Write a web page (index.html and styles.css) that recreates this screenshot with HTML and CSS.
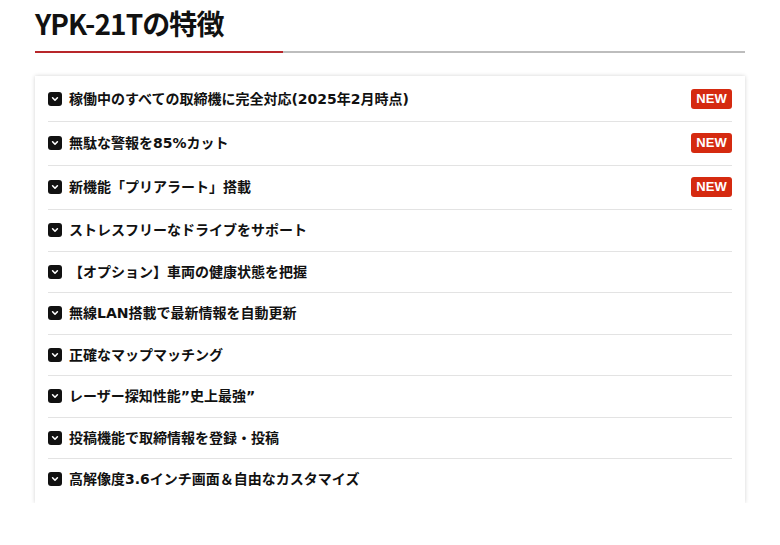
FILE: index.html
```html
<!DOCTYPE html>
<html lang="ja">
<head>
<meta charset="utf-8">
<link rel="stylesheet" href="styles.css">
</head>
<body>
<div class="wrap">
  <h2 class="title">YPK-21Tの特徴</h2>
  <ul class="card">
    <li class="row badge-row"><span class="ic"><svg width="14" height="14" viewBox="0 0 14 14"><rect width="14" height="14" rx="3" fill="#111"/><path d="M4.6 5.8 L7 8.2 L9.4 5.8" fill="none" stroke="#fff" stroke-width="1.6" stroke-linecap="round" stroke-linejoin="round"/></svg></span><span class="txt">稼働中のすべての取締機に完全対応(2025年2月時点)</span><span class="new">NEW</span></li>
    <li class="row badge-row"><span class="ic"><svg width="14" height="14" viewBox="0 0 14 14"><rect width="14" height="14" rx="3" fill="#111"/><path d="M4.6 5.8 L7 8.2 L9.4 5.8" fill="none" stroke="#fff" stroke-width="1.6" stroke-linecap="round" stroke-linejoin="round"/></svg></span><span class="txt">無駄な警報を85%カット</span><span class="new">NEW</span></li>
    <li class="row badge-row"><span class="ic"><svg width="14" height="14" viewBox="0 0 14 14"><rect width="14" height="14" rx="3" fill="#111"/><path d="M4.6 5.8 L7 8.2 L9.4 5.8" fill="none" stroke="#fff" stroke-width="1.6" stroke-linecap="round" stroke-linejoin="round"/></svg></span><span class="txt">新機能「プリアラート」搭載</span><span class="new">NEW</span></li>
    <li class="row"><span class="ic"><svg width="14" height="14" viewBox="0 0 14 14"><rect width="14" height="14" rx="3" fill="#111"/><path d="M4.6 5.8 L7 8.2 L9.4 5.8" fill="none" stroke="#fff" stroke-width="1.6" stroke-linecap="round" stroke-linejoin="round"/></svg></span><span class="txt">ストレスフリーなドライブをサポート</span></li>
    <li class="row"><span class="ic"><svg width="14" height="14" viewBox="0 0 14 14"><rect width="14" height="14" rx="3" fill="#111"/><path d="M4.6 5.8 L7 8.2 L9.4 5.8" fill="none" stroke="#fff" stroke-width="1.6" stroke-linecap="round" stroke-linejoin="round"/></svg></span><span class="txt">【オプション】車両の健康状態を把握</span></li>
    <li class="row"><span class="ic"><svg width="14" height="14" viewBox="0 0 14 14"><rect width="14" height="14" rx="3" fill="#111"/><path d="M4.6 5.8 L7 8.2 L9.4 5.8" fill="none" stroke="#fff" stroke-width="1.6" stroke-linecap="round" stroke-linejoin="round"/></svg></span><span class="txt">無線LAN搭載で最新情報を自動更新</span></li>
    <li class="row"><span class="ic"><svg width="14" height="14" viewBox="0 0 14 14"><rect width="14" height="14" rx="3" fill="#111"/><path d="M4.6 5.8 L7 8.2 L9.4 5.8" fill="none" stroke="#fff" stroke-width="1.6" stroke-linecap="round" stroke-linejoin="round"/></svg></span><span class="txt">正確なマップマッチング</span></li>
    <li class="row"><span class="ic"><svg width="14" height="14" viewBox="0 0 14 14"><rect width="14" height="14" rx="3" fill="#111"/><path d="M4.6 5.8 L7 8.2 L9.4 5.8" fill="none" stroke="#fff" stroke-width="1.6" stroke-linecap="round" stroke-linejoin="round"/></svg></span><span class="txt">レーザー探知性能”史上最強”</span></li>
    <li class="row"><span class="ic"><svg width="14" height="14" viewBox="0 0 14 14"><rect width="14" height="14" rx="3" fill="#111"/><path d="M4.6 5.8 L7 8.2 L9.4 5.8" fill="none" stroke="#fff" stroke-width="1.6" stroke-linecap="round" stroke-linejoin="round"/></svg></span><span class="txt">投稿機能で取締情報を登録・投稿</span></li>
    <li class="row"><span class="ic"><svg width="14" height="14" viewBox="0 0 14 14"><rect width="14" height="14" rx="3" fill="#111"/><path d="M4.6 5.8 L7 8.2 L9.4 5.8" fill="none" stroke="#fff" stroke-width="1.6" stroke-linecap="round" stroke-linejoin="round"/></svg></span><span class="txt">高解像度3.6インチ画面＆自由なカスタマイズ</span></li>
  </ul>
</div>
</body>
</html>
```
FILE: styles.css
```css
* { box-sizing: border-box; }
html, body { margin: 0; padding: 0; background: #fff; }
body {
  font-family: "Noto Sans CJK JP", "Noto Sans", sans-serif;
  color: #111;
}
.wrap {
  padding: 3px 35px 0 35px;
}
.title {
  position: relative;
  margin: 0;
  font-size: 28px;
  line-height: 40px;
  font-weight: 700;
  letter-spacing: -0.9px;
  padding-bottom: 8px;
  border-bottom: 2px solid #bdbdbd;
}
.title::after {
  content: "";
  position: absolute;
  left: 0;
  bottom: -2px;
  width: 248px;
  height: 2px;
  background: #b8262a;
}
.card {
  list-style: none;
  margin: 23px 0 0 0;
  padding: 2px 13px 3px;
  background: #fff;
  box-shadow: 0 0 4px rgba(0, 0, 0, 0.18);
}
.row {
  display: flex;
  align-items: center;
  gap: 7px;
  padding: 10px 0;
  line-height: 20.5px;
  font-family: "DejaVu Sans", "Noto Sans CJK JP", sans-serif;
  font-size: 14px;
  font-weight: 700;
  border-bottom: 1px solid #e3e3e3;
}
.row:last-child { border-bottom: none; }
.badge-row { padding: 11px 0 11.5px; }
.ic { display: flex; width: 14px; height: 14px; flex: none; }
.txt { flex: 1; }
.new {
  flex: none;
  background: #d52a10;
  color: #fff;
  font-family: "Liberation Sans", Arial, sans-serif;
  font-weight: 700;
  font-size: 13px;
  letter-spacing: 0;
  line-height: 20px;
  height: 20px;
  width: 41px;
  text-align: center;
  border-radius: 3px;
}
```
